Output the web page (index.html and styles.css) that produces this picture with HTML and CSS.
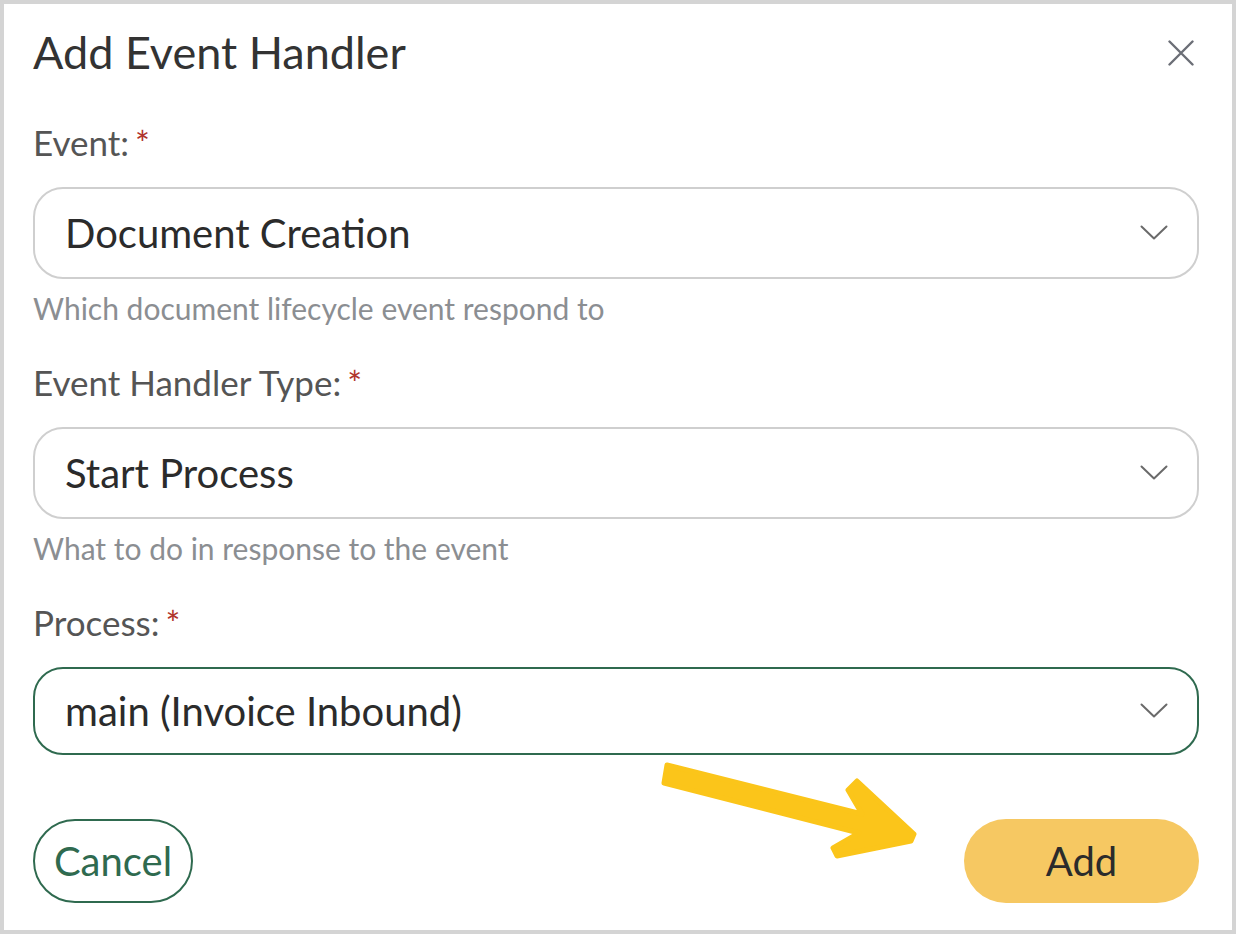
FILE: index.html
```html
<!DOCTYPE html>
<html lang="en">
<head>
<meta charset="utf-8">
<title>Add Event Handler</title>
<link rel="stylesheet" href="styles.css">
</head>
<body>
<div class="frame">
  <div class="dialog" role="dialog" aria-labelledby="dlg-title">
    <header class="dialog-head">
      <h1 id="dlg-title" class="dialog-title">Add Event Handler</h1>
      <button class="close-btn" aria-label="Close">
        <svg width="26" height="26" viewBox="0 0 26 26"><path d="M1.5 1.5 L24.5 24.5 M24.5 1.5 L1.5 24.5" stroke="#6b6e76" stroke-width="2.4" stroke-linecap="round" fill="none"/></svg>
      </button>
    </header>

    <div class="field">
      <label class="field-label">Event:<span class="req">*</span></label>
      <div class="select">
        <span class="select-value">Document Creation</span>
        <svg class="chevron" width="28" height="15" viewBox="0 0 28 15"><path d="M1.5 1.5 L14 13.5 L26.5 1.5" stroke="#6a6a6a" stroke-width="2" fill="none" stroke-linejoin="round" stroke-linecap="round"/></svg>
      </div>
      <p class="field-help">Which document lifecycle event respond to</p>
    </div>

    <div class="field">
      <label class="field-label">Event Handler Type:<span class="req">*</span></label>
      <div class="select">
        <span class="select-value">Start Process</span>
        <svg class="chevron" width="28" height="15" viewBox="0 0 28 15"><path d="M1.5 1.5 L14 13.5 L26.5 1.5" stroke="#6a6a6a" stroke-width="2" fill="none" stroke-linejoin="round" stroke-linecap="round"/></svg>
      </div>
      <p class="field-help">What to do in response to the event</p>
    </div>

    <div class="field">
      <label class="field-label">Process:<span class="req">*</span></label>
      <div class="select select-active">
        <span class="select-value">main (Invoice Inbound)</span>
        <svg class="chevron" width="28" height="15" viewBox="0 0 28 15"><path d="M1.5 1.5 L14 13.5 L26.5 1.5" stroke="#6a6a6a" stroke-width="2" fill="none" stroke-linejoin="round" stroke-linecap="round"/></svg>
      </div>
    </div>

    <footer class="dialog-actions">
      <button class="btn btn-outline">Cancel</button>
      <button class="btn btn-primary">Add</button>
    </footer>

    <svg class="pointer-arrow" width="280" height="120" viewBox="0 0 280 120" aria-hidden="true">
      <polygon points="17,15 212,64 198,40 207,31 264,84 261,91 187,106 183,98 209,83 14,33" fill="#fbc51a" stroke="#fbc51a" stroke-width="5" stroke-linejoin="round"/>
    </svg>
  </div>
</div>
</body>
</html>
```

FILE: styles.css
```css
* { box-sizing: border-box; }

html, body {
  margin: 0;
  padding: 0;
}

body {
  font-family: "Lato", "Noto Sans", sans-serif;
  background: #d4d4d4;
}

.frame {
  width: 1236px;
  height: 934px;
  padding: 4px;
  background: #d4d4d4;
}

.dialog {
  position: relative;
  height: 926px;
  background: #ffffff;
  padding: 20px 33px 27px 29px;
  display: flex;
  flex-direction: column;
}

.dialog-head {
  display: flex;
  align-items: center;
  justify-content: space-between;
  height: 56px;
}

.dialog-title {
  margin: 0;
  font-size: 45px;
  line-height: 56px;
  font-weight: 400;
  color: #333333;
}

.close-btn {
  border: 0;
  background: none;
  padding: 0;
  margin-right: 5px;
  margin-top: 2px;
  width: 26px;
  height: 26px;
  display: flex;
}

.field {
  display: flex;
  flex-direction: column;
}

.dialog-head + .field { margin-top: 42px; }
.field + .field { margin-top: 37px; }

.field-label {
  display: block;
  height: 40px;
  font-size: 35px;
  line-height: 40px;
  color: #555555;
}

.req {
  color: #b0342b;
  margin-left: 6px;
  line-height: 1;
}

.select {
  margin-top: 25px;
  height: 92px;
  border: 2px solid #cfcfcf;
  border-radius: 30px;
  display: flex;
  align-items: center;
  justify-content: space-between;
  padding: 0 29px 0 30px;
}

.select-active {
  border-color: #2f6a4f;
  height: 88px;
}

.select-value {
  font-size: 40px;
  color: #2b2b2b;
}

.chevron { margin-top: -2px; }

.field-help {
  margin: 12px 0 0;
  height: 34px;
  font-size: 30px;
  line-height: 34px;
  color: #8b8e92;
}

.dialog-actions {
  margin-top: auto;
  display: flex;
  justify-content: space-between;
  align-items: center;
}

.btn {
  font-family: "Lato", "Noto Sans", sans-serif;
  font-size: 40px;
  height: 84px;
  border-radius: 42px;
  padding: 0;
}

.btn-outline {
  width: 160px;
  background: #ffffff;
  border: 2px solid #2f6a4f;
  color: #2f6a4f;
}

.btn-primary {
  width: 235px;
  background: #f6c862;
  border: 0;
  color: #2b2b2b;
}

.pointer-arrow {
  position: absolute;
  left: 646px;
  top: 746px;
  pointer-events: none;
}
```
